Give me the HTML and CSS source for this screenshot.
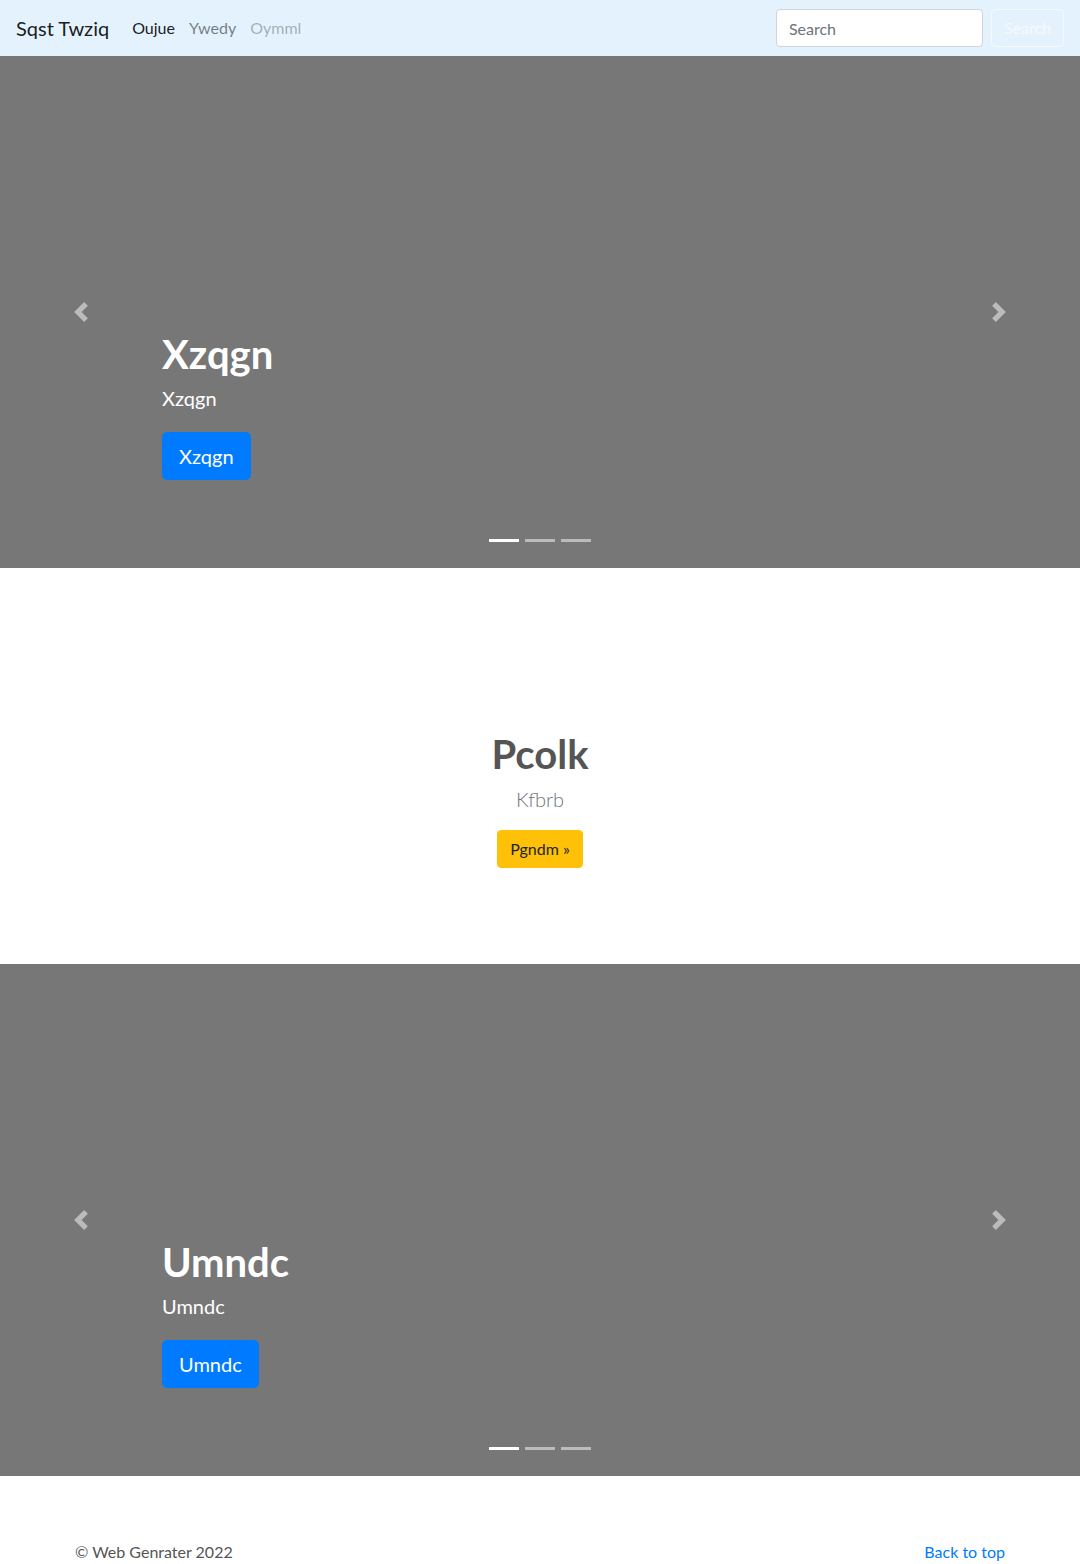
FILE: index.html
```html
<!DOCTYPE html>
<html lang="en">
<head>
<meta charset="utf-8">
<title>Sqst Twziq</title>
<link rel="stylesheet" href="styles.css">
</head>
<body>
<nav class="navbar">
  <a class="brand" href="#">Sqst Twziq</a>
  <ul class="nav">
    <li><a class="nav-link active" href="#">Oujue</a></li>
    <li><a class="nav-link" href="#">Ywedy</a></li>
    <li><a class="nav-link disabled" href="#">Oymml</a></li>
  </ul>
  <form class="search">
    <input class="search-input" type="search" placeholder="Search">
    <button class="search-btn" type="button">Search</button>
  </form>
</nav>

<section class="carousel">
  <div class="slide"></div>
  <div class="caption">
    <h1 class="caption-title">Xzqgn</h1>
    <p class="caption-text">Xzqgn</p>
    <p class="caption-action"><a class="btn-primary" href="#">Xzqgn</a></p>
  </div>
  <a class="control control-prev" href="#">
    <svg class="control-icon" viewBox="0 0 8 8"><path d="M5.25 0l-4 4 4 4 1.5-1.5L4.25 4l2.5-2.5L5.25 0z"/></svg>
  </a>
  <a class="control control-next" href="#">
    <svg class="control-icon" viewBox="0 0 8 8"><path d="M2.75 0l-1.5 1.5L3.75 4l-2.5 2.5L2.75 8l4-4-4-4z"/></svg>
  </a>
  <ol class="indicators">
    <li class="indicator active"></li>
    <li class="indicator"></li>
    <li class="indicator"></li>
  </ol>
</section>

<section class="feature">
  <h1 class="feature-title">Pcolk</h1>
  <p class="feature-lead">Kfbrb</p>
  <a class="btn-warning" href="#">Pgndm &raquo;</a>
</section>

<section class="carousel">
  <div class="slide"></div>
  <div class="caption">
    <h1 class="caption-title">Umndc</h1>
    <p class="caption-text">Umndc</p>
    <p class="caption-action"><a class="btn-primary" href="#">Umndc</a></p>
  </div>
  <a class="control control-prev" href="#">
    <svg class="control-icon" viewBox="0 0 8 8"><path d="M5.25 0l-4 4 4 4 1.5-1.5L4.25 4l2.5-2.5L5.25 0z"/></svg>
  </a>
  <a class="control control-next" href="#">
    <svg class="control-icon" viewBox="0 0 8 8"><path d="M2.75 0l-1.5 1.5L3.75 4l-2.5 2.5L2.75 8l4-4-4-4z"/></svg>
  </a>
  <ol class="indicators">
    <li class="indicator active"></li>
    <li class="indicator"></li>
    <li class="indicator"></li>
  </ol>
</section>

<footer class="footer">
  <p class="footer-copy">&copy; Web Genrater 2022</p>
  <a class="footer-top" href="#">Back to top</a>
</footer>
</body>
</html>
```

FILE: styles.css
```css
* { box-sizing: border-box; }

html, body {
  margin: 0;
  padding: 0;
}

body {
  font-family: Lato, "Open Sans", "Liberation Sans", sans-serif;
  font-size: 16px;
  line-height: 1.5;
  color: #212529;
  background: #fff;
}

a { text-decoration: none; }

/* Navbar */
.navbar {
  display: flex;
  align-items: center;
  height: 56px;
  padding: 8px 16px;
  background: #e3f2fd;
}

.brand {
  font-size: 20px;
  line-height: 30px;
  color: rgba(0, 0, 0, .9);
  margin-right: 16px;
}

.nav {
  display: flex;
  list-style: none;
  margin: 0;
  padding: 0;
  flex: 1;
}

.nav-link {
  display: block;
  padding: 8px 7px;
  color: rgba(0, 0, 0, .5);
}

.nav-link.active { color: rgba(0, 0, 0, .9); }
.nav-link.disabled { color: rgba(0, 0, 0, .3); }

.search {
  display: flex;
  align-items: center;
  gap: 8px;
}

.search-input {
  width: 207px;
  height: 38px;
  padding: 6px 12px;
  font: inherit;
  color: #495057;
  background: #fff;
  border: 1px solid #ced4da;
  border-radius: 4px;
}

.search-input::placeholder { color: #6c757d; }

.search-btn {
  height: 38px;
  padding: 6px 12px;
  font: inherit;
  color: #f8f9fa;
  background: transparent;
  border: 1px solid #f8f9fa;
  border-radius: 4px;
}

/* Carousel */
.carousel {
  position: relative;
  height: 512px;
  background: #777;
}

.slide {
  height: 100%;
}

.caption {
  position: absolute;
  left: 15%;
  right: 15%;
  bottom: 52px;
  padding: 20px 0;
  color: #fff;
  z-index: 2;
}

.caption-title {
  margin: 0 0 5px;
  font-size: 40px;
  line-height: 48px;
  font-weight: 700;
}

.caption-text {
  margin: 0 0 19px;
  font-size: 20px;
  line-height: 30px;
}

.caption-action {
  margin: 0 0 16px;
  display: flex;
}

.btn-primary {
  display: inline-block;
  height: 48px;
  padding: 8px 16px;
  font-size: 20px;
  line-height: 30px;
  color: #fff;
  background: #007bff;
  border: 1px solid #007bff;
  border-radius: 5px;
}

.control {
  position: absolute;
  top: 0;
  bottom: 0;
  width: 15%;
  display: flex;
  align-items: center;
  justify-content: center;
  opacity: .5;
  z-index: 1;
}

.control-prev { left: 0; }
.control-next { right: 0; }

.control-icon {
  width: 20px;
  height: 20px;
  fill: #fff;
}

.indicators {
  position: absolute;
  left: 0;
  right: 0;
  bottom: 0;
  margin: 0 0 16px;
  padding: 0;
  list-style: none;
  display: flex;
  justify-content: center;
  z-index: 3;
}

.indicator {
  width: 30px;
  height: 3px;
  margin: 10px 3px;
  background: #fff;
  opacity: .5;
}

.indicator.active { opacity: 1; }

/* Feature */
.feature {
  padding: 162px 0 96px;
  text-align: center;
}

.feature-title {
  margin: 0 0 6px;
  font-size: 40px;
  line-height: 48px;
  font-weight: 700;
  color: #555;
}

.feature-lead {
  margin: 0 0 16px;
  font-size: 20px;
  line-height: 30px;
  font-weight: 300;
  color: #6c757d;
}

.btn-warning {
  display: inline-block;
  height: 38px;
  padding: 6px 12px;
  font-size: 16px;
  line-height: 24px;
  color: #212529;
  background: #ffc107;
  border: 1px solid #ffc107;
  border-radius: 4px;
}

/* Footer */
.footer {
  width: 960px;
  margin: 0 auto;
  padding: 64px 15px 0;
  display: flex;
  justify-content: space-between;
  align-items: flex-start;
}

.footer-copy {
  margin: 0 0 16px;
  color: #555;
}

.footer-top {
  color: #007bff;
}
```
